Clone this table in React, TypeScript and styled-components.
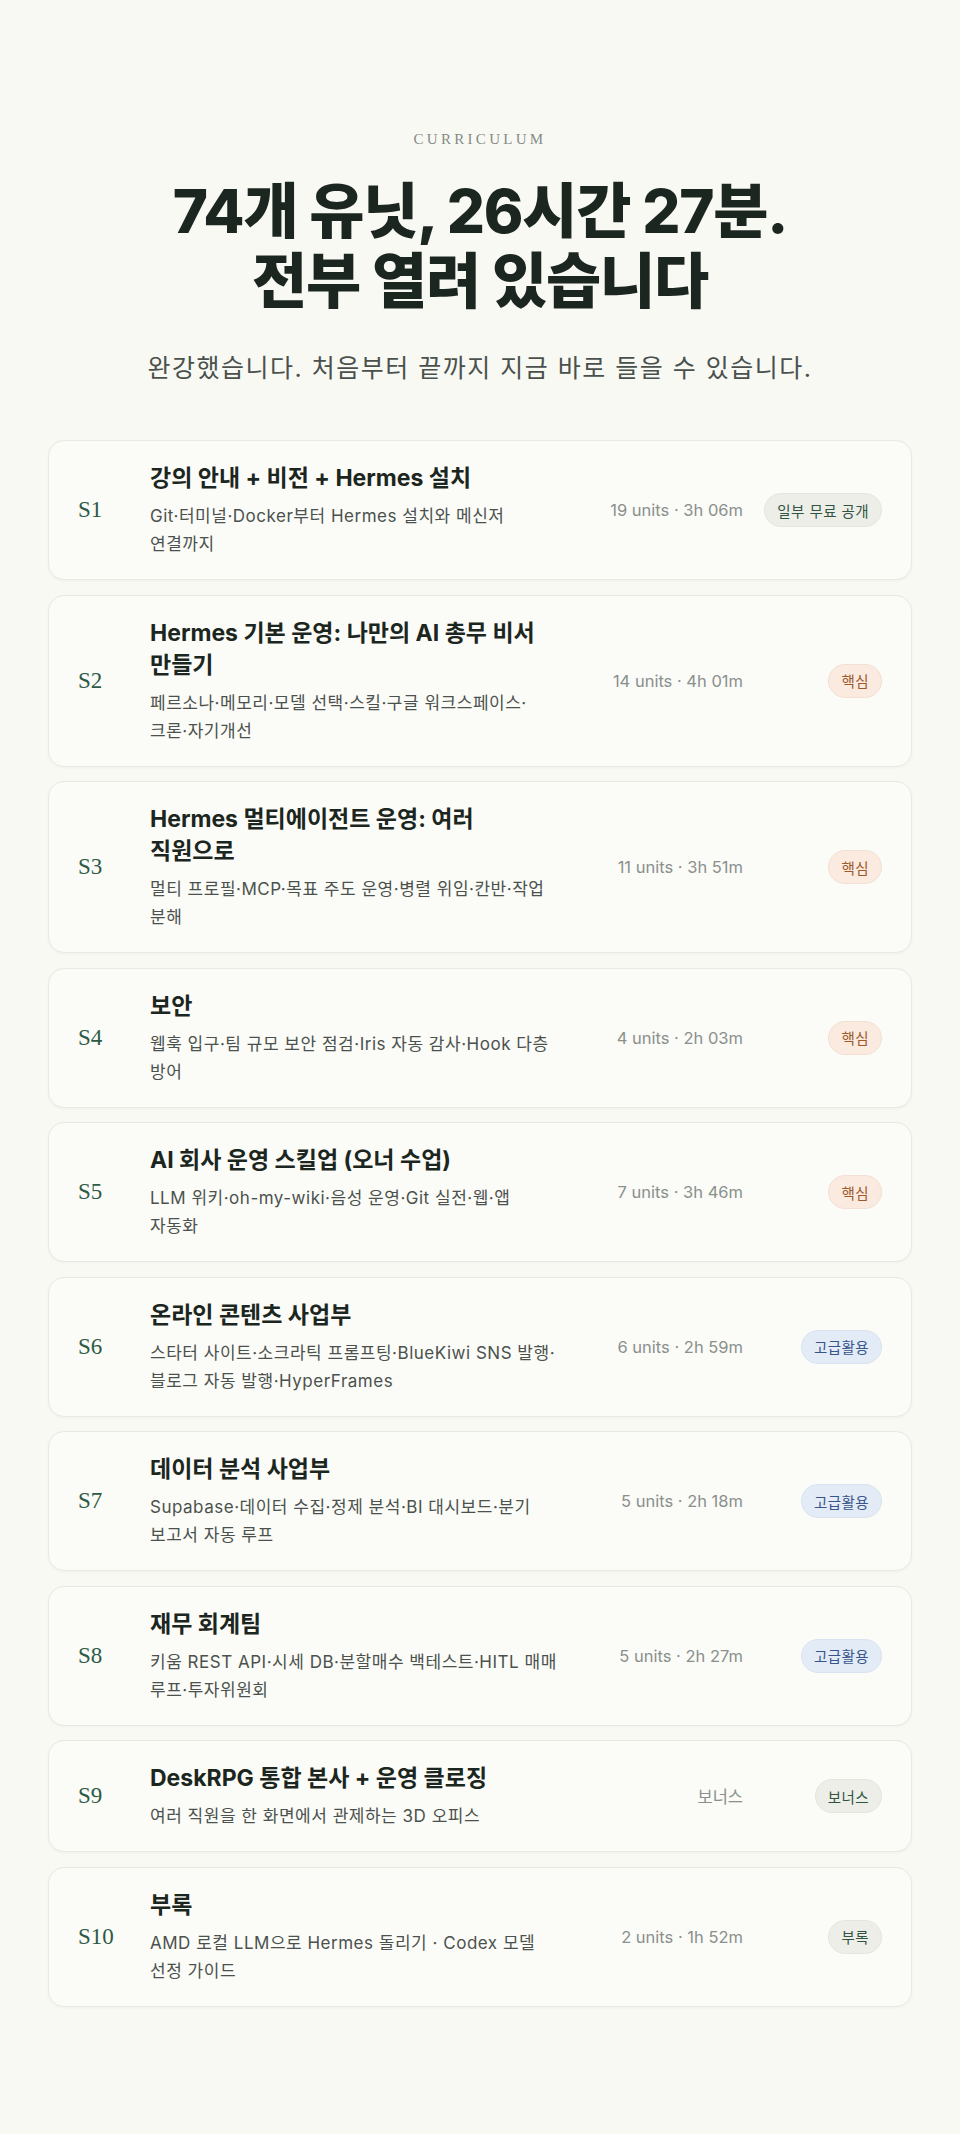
import * as React from 'react';
import styled, { createGlobalStyle } from 'styled-components';

const GlobalStyle = createGlobalStyle`
  html, body {
    margin: 0;
    padding: 0;
    background: #f9f9f4;
  }
  body {
    font-family: "Inter", "Noto Sans CJK KR", sans-serif;
    color: #1c2620;
  }
`;

const Page = styled.div`
  padding: 129px 48px 129px 48px;
  display: flex;
  flex-direction: column;
  align-items: center;
`;

const Eyebrow = styled.div`
  font-family: "Liberation Serif", serif;
  font-size: 15px;
  line-height: 20px;
  letter-spacing: 0.22em;
  color: #858b86;
  text-transform: uppercase;
`;

const Heading = styled.h1`
  margin: 27px 0 0 0;
  font-size: 60px;
  line-height: 70px;
  font-weight: 800;
  letter-spacing: -0.02em;
  text-align: center;
  color: #1c2620;
`;

const Lead = styled.p`
  margin: 34px 0 0 0;
  font-size: 25px;
  line-height: 36px;
  letter-spacing: 0.06em;
  color: #4a514c;
  text-align: center;
`;

const List = styled.div`
  margin-top: 54px;
  width: 100%;
  max-width: 864px;
  display: flex;
  flex-direction: column;
  gap: 14.5px;
`;

const Card = styled.div`
  display: grid;
  grid-template-columns: 48px 412px 1fr 115px;
  column-gap: 24px;
  align-items: center;
  padding: 21px 29px;
  background: #fbfbf8;
  border: 1px solid #e8e9e3;
  border-radius: 16px;
  box-shadow: 0 1px 3px rgba(30, 40, 30, 0.04);
`;

const Label = styled.div`
  font-family: "Liberation Serif", "DejaVu Serif", serif;
  font-size: 23px;
  color: #2d5a45;
`;

const Body = styled.div`
  display: flex;
  flex-direction: column;
  gap: 8px;
  word-break: keep-all;
`;

const Title = styled.div`
  max-width: 400px;
  font-size: 23px;
  line-height: 32px;
  font-weight: 700;
  color: #1c2620;
`;

const Desc = styled.div`
  font-size: 17px;
  line-height: 28px;
  letter-spacing: 0.03em;
  color: #4b524d;
`;

const Meta = styled.div`
  justify-self: end;
  font-size: 16.5px;
  color: #8a908b;
  white-space: nowrap;
`;

type Tone = 'free' | 'core' | 'adv' | 'plain';

const toneColors: Record<Tone, { bg: string; fg: string; bd: string }> = {
  free: { bg: '#edeee8', fg: '#2f5443', bd: '#e4e6df' },
  core: { bg: '#fbeadf', fg: '#9a5a2e', bd: '#f3e0d3' },
  adv: { bg: '#e3ebf6', fg: '#37558a', bd: '#d9e3f0' },
  plain: { bg: '#edeee8', fg: '#2f5443', bd: '#e4e6df' },
};

const Badge = styled.span<{ $tone: Tone }>`
  justify-self: end;
  display: inline-flex;
  align-items: center;
  height: 34px;
  box-sizing: border-box;
  padding: 0 12px;
  border-radius: 17px;
  font-size: 14.5px;
  letter-spacing: 0.03em;
  white-space: nowrap;
  background: ${p => toneColors[p.$tone].bg};
  color: ${p => toneColors[p.$tone].fg};
  border: 1px solid ${p => toneColors[p.$tone].bd};
`;

interface Section {
  id: string;
  title: string;
  desc: string;
  meta: string;
  badge: string;
  tone: Tone;
}

const sections: Section[] = [
  { id: 'S1', title: '강의 안내 + 비전 + Hermes 설치', desc: 'Git·터미널·Docker부터 Hermes 설치와 메신저 연결까지', meta: '19 units · 3h 06m', badge: '일부 무료 공개', tone: 'free' },
  { id: 'S2', title: 'Hermes 기본 운영: 나만의 AI 총무 비서 만들기', desc: '페르소나·메모리·모델 선택·스킬·구글 워크스페이스·크론·자기개선', meta: '14 units · 4h 01m', badge: '핵심', tone: 'core' },
  { id: 'S3', title: 'Hermes 멀티에이전트 운영: 여러 직원으로', desc: '멀티 프로필·MCP·목표 주도 운영·병렬 위임·칸반·작업 분해', meta: '11 units · 3h 51m', badge: '핵심', tone: 'core' },
  { id: 'S4', title: '보안', desc: '웹훅 입구·팀 규모 보안 점검·Iris 자동 감사·Hook 다층 방어', meta: '4 units · 2h 03m', badge: '핵심', tone: 'core' },
  { id: 'S5', title: 'AI 회사 운영 스킬업 (오너 수업)', desc: 'LLM 위키·oh-my-wiki·음성 운영·Git 실전·웹·앱 자동화', meta: '7 units · 3h 46m', badge: '핵심', tone: 'core' },
  { id: 'S6', title: '온라인 콘텐츠 사업부', desc: '스타터 사이트·소크라틱 프롬프팅·BlueKiwi SNS 발행·블로그 자동 발행·HyperFrames', meta: '6 units · 2h 59m', badge: '고급활용', tone: 'adv' },
  { id: 'S7', title: '데이터 분석 사업부', desc: 'Supabase·데이터 수집·정제 분석·BI 대시보드·분기 보고서 자동 루프', meta: '5 units · 2h 18m', badge: '고급활용', tone: 'adv' },
  { id: 'S8', title: '재무 회계팀', desc: '키움 REST API·시세 DB·분할매수 백테스트·HITL 매매 루프·투자위원회', meta: '5 units · 2h 27m', badge: '고급활용', tone: 'adv' },
  { id: 'S9', title: 'DeskRPG 통합 본사 + 운영 클로징', desc: '여러 직원을 한 화면에서 관제하는 3D 오피스', meta: '보너스', badge: '보너스', tone: 'plain' },
  { id: 'S10', title: '부록', desc: 'AMD 로컬 LLM으로 Hermes 돌리기 · Codex 모델 선정 가이드', meta: '2 units · 1h 52m', badge: '부록', tone: 'plain' },
];

// glue the middle dot to the word before it (word joiner), allow a break after it (zero-width space)
const withBreaks = (text: string) => text.replace(/(\S)·(\S)/g, '$1\u2060·\u200B$2');

export default function App() {
  return (
    <>
      <GlobalStyle />
      <Page>
        <Eyebrow>Curriculum</Eyebrow>
        <Heading>
          74개 유닛, 26시간 27분.
          <br />
          전부 열려 있습니다
        </Heading>
        <Lead>완강했습니다. 처음부터 끝까지 지금 바로 들을 수 있습니다.</Lead>
        <List>
          {sections.map(s => (
            <Card key={s.id}>
              <Label>{s.id}</Label>
              <Body>
                <Title>{s.title}</Title>
                <Desc>{withBreaks(s.desc)}</Desc>
              </Body>
              <Meta>{s.meta}</Meta>
              <Badge $tone={s.tone}>{s.badge}</Badge>
            </Card>
          ))}
        </List>
      </Page>
    </>
  );
}
